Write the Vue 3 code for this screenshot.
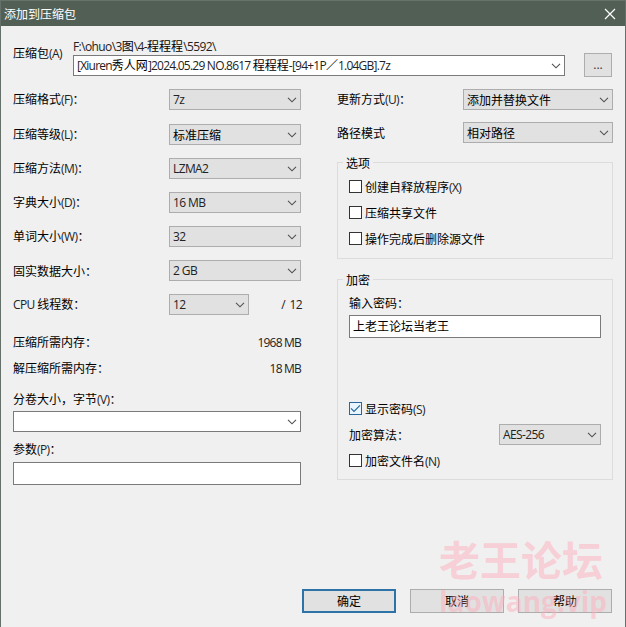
<script setup>
import { h } from 'vue'

// Splits mixed text into CJK and Latin runs so that each gets its own metrics.
const Txt = (props) =>
  h('span', { class: 'txt' },
    props.t.split(/([\x20-\x7e]+)/).filter(Boolean).map((s) =>
      h('span', { class: /^[\x20-\x7e]/.test(s) ? 'lat' : 'han' }, s)))
Txt.props = ['t']

const Chevron = () =>
  h('svg', { class: 'chev', viewBox: '0 0 10 6', width: 10, height: 6 },
    [h('path', { d: 'M1 0.8 L5 4.8 L9 0.8', fill: 'none', stroke: '#505050', 'stroke-width': 1.1 })])

const rows = [
  ['压缩格式(F)：', '7z'],
  ['压缩等级(L)：', '标准压缩'],
  ['压缩方法(M)：', 'LZMA2'],
  ['字典大小(D)：', '16 MB'],
  ['单词大小(W)：', '32'],
  ['固实数据大小：', '2 GB'],
]
const options = ['创建自释放程序(X)', '压缩共享文件', '操作完成后删除源文件']
</script>

<template>
  <div class="window">
    <header class="title">
      <span>添加到压缩包</span>
      <svg width="12" height="12" viewBox="0 0 12 12"><path d="M1 1 L11 11 M11 1 L1 11" stroke="#fff" stroke-width="1.2" /></svg>
    </header>

    <section class="archive">
      <Txt class="archive-label" t="压缩包(A)" />
      <div class="archive-main">
        <Txt class="path" t="F:\ohuo\3图\4-程程程\5592\" />
        <div class="combo white name"><Txt t="[Xiuren秀人网]2024.05.29 NO.8617 程程程-[94+1P／1.04GB].7z" /><Chevron /></div>
      </div>
      <button class="btn browse">...</button>
    </section>

    <main class="columns">
      <section class="left">
        <div class="settings">
          <div v-for="r in rows" :key="r[0]" class="row">
            <Txt :t="r[0]" />
            <div class="combo"><Txt :t="r[1]" /><Chevron /></div>
          </div>
          <div class="row">
            <Txt t="CPU 线程数：" />
            <div class="threads">
              <div class="combo"><Txt t="12" /><Chevron /></div>
              <Txt t="/ 12" />
            </div>
          </div>
        </div>
        <div class="memory">
          <div><Txt t="压缩所需内存：" /><Txt t="1968 MB" /></div>
          <div><Txt t="解压缩所需内存：" /><Txt t="18 MB" /></div>
        </div>
        <Txt class="field-label" t="分卷大小，字节(V)：" />
        <div class="combo white"><Chevron /></div>
        <Txt class="field-label params" t="参数(P)：" />
        <div class="input"></div>
      </section>

      <section class="right">
        <div class="row"><Txt t="更新方式(U)：" /><div class="combo"><Txt t="添加并替换文件" /><Chevron /></div></div>
        <div class="row second"><Txt t="路径模式" /><div class="combo"><Txt t="相对路径" /><Chevron /></div></div>

        <div class="group options">
          <span class="legend">选项</span>
          <label v-for="o in options" :key="o" class="check"><i class="box"></i><Txt :t="o" /></label>
        </div>

        <div class="group crypt">
          <span class="legend">加密</span>
          <Txt class="pw-label" t="输入密码：" />
          <div class="input pw"><Txt t="上老王论坛当老王" /></div>
          <label class="check"><i class="box on"><svg width="11" height="11" viewBox="0 0 11 11"><path d="M1 5.3 L4 8.3 L10 2.3" fill="none" stroke="#26689b" stroke-width="1.2" /></svg></i><Txt t="显示密码(S)" /></label>
          <div class="row algo"><Txt t="加密算法：" /><div class="combo"><Txt t="AES-256" /><Chevron /></div></div>
          <label class="check"><i class="box"></i><Txt t="加密文件名(N)" /></label>
        </div>
      </section>
    </main>

    <footer class="actions">
      <button class="btn primary">确定</button>
      <button class="btn">取消</button>
      <button class="btn">帮助</button>
    </footer>

    <div class="watermark">
      <div class="wm-name">老王论坛</div>
      <div class="wm-site">laowang.vip</div>
    </div>
  </div>
</template>

<style>
body { margin: 0; overflow: hidden; }
</style>

<style scoped>
.window {
  position: relative;
  box-sizing: border-box;
  width: 626px;
  height: 627px;
  background: #f0f0f0;
  border: solid #66706a;
  border-width: 0 1px;
  font: 12px/16px 'Noto Sans CJK SC', sans-serif;
  color: #000;
  overflow: hidden;
}
.window :deep(.txt) { display: inline-block; white-space: pre; }
.window :deep(.lat) {
  font-family: 'Open Sans', sans-serif;
  font-size: 12px;
  letter-spacing: -0.6px;
  color: #222;
}
.window .name :deep(.lat) { letter-spacing: -0.77px; }
.memory :deep(.lat) { letter-spacing: -0.8px; }
.threads :deep(.lat) { word-spacing: 2px; }
.title {
  display: flex;
  justify-content: space-between;
  align-items: center;
  box-sizing: border-box;
  height: 26px;
  margin: 0 -1px;
  padding: 0 10px 0 4px;
  background: #525f55;
  border-top: 1px solid #67736a;
  color: #fff;
}
.archive { display: flex; height: 63px; padding-left: 12px; }
.archive-label { width: 60px; padding-top: 19px; }
.archive-main { width: 492px; padding-top: 12px; }
.path { display: block; height: 17px; line-height: 16px; }
.combo {
  display: flex;
  align-items: center;
  justify-content: space-between;
  box-sizing: border-box;
  height: 21px;
  padding: 0 3px;
  background: #e1e1e1;
  border: 1px solid #adadad;
}
.white { background: #fff; border-color: #7a7a7a; }
.combo :deep(.chev) { flex: none; margin-left: auto; }
.btn {
  box-sizing: border-box;
  width: 94px;
  height: 24px;
  padding: 0;
  background: #e1e1e1;
  border: 1px solid #adadad;
  font: inherit;
  color: #000;
}
.browse { width: 28px; margin: 27px 0 0 19px; font-family: 'Open Sans', sans-serif; color: #333; }
.primary { border: 2px solid #2d73a8; }
.columns { display: flex; padding-left: 12px; height: 500px; }
.left { width: 288px; margin-right: 36px; }
.settings { display: grid; gap: 13px; }
.row { display: flex; justify-content: space-between; align-items: center; height: 21px; }
.row .combo { width: 132px; }
.settings .row:first-child { margin-bottom: 1px; }
.threads { display: flex; justify-content: space-between; align-items: center; width: 133px; margin-right: -1px; }
.threads .combo { width: 80px; }
.memory { display: grid; gap: 10px; padding-top: 19px; }
.memory div { display: flex; justify-content: space-between; height: 16px; }
.field-label { margin-top: 15px; height: 20px; vertical-align: top; }
.params { margin-top: 9px; height: 21px; }
.input { box-sizing: border-box; height: 23px; background: #fff; border: 1px solid #7a7a7a; }
.right { width: 276px; }
.right > .row .combo { width: 150px; }
.second { margin-top: 12px; }
.group { box-sizing: border-box; border: 1px solid #dcdcdc; padding: 0 11px; }
.legend { display: block; width: 24px; height: 16px; margin: -8px 0 0 -6px; padding: 0 3px; background: #f0f0f0; }
.options { height: 97px; margin-top: 19px; }
.check { display: flex; align-items: center; height: 16px; margin-bottom: 10px; }
.options .legend { margin-bottom: 8px; }
.box { box-sizing: border-box; width: 13px; height: 13px; margin: 0 3px 1px 0; background: #fff; border: 1px solid #333; }
.on { border-color: #26689b; background: #eaf6ff; }
.on svg { display: block; }
.crypt { height: 201px; margin-top: 20px; }
.pw-label { margin-top: 7px; height: 20px; vertical-align: top; }
.pw { padding: 2px 3px; margin-bottom: 63px; }
.crypt .check { margin-bottom: 7px; }
.algo { margin-bottom: 8px; }
.algo .combo { width: 102px; }
.actions { display: flex; justify-content: flex-end; gap: 14px; padding-right: 13px; }
.watermark {
  position: absolute;
  left: 438px;
  top: 537px;
  color: rgba(255, 170, 185, 0.47);
  font-weight: bold;
  white-space: nowrap;
}
.wm-name { font-size: 41px; line-height: 42px; }
.wm-site { font: bold 28px/44px 'Open Sans', sans-serif; }
</style>
